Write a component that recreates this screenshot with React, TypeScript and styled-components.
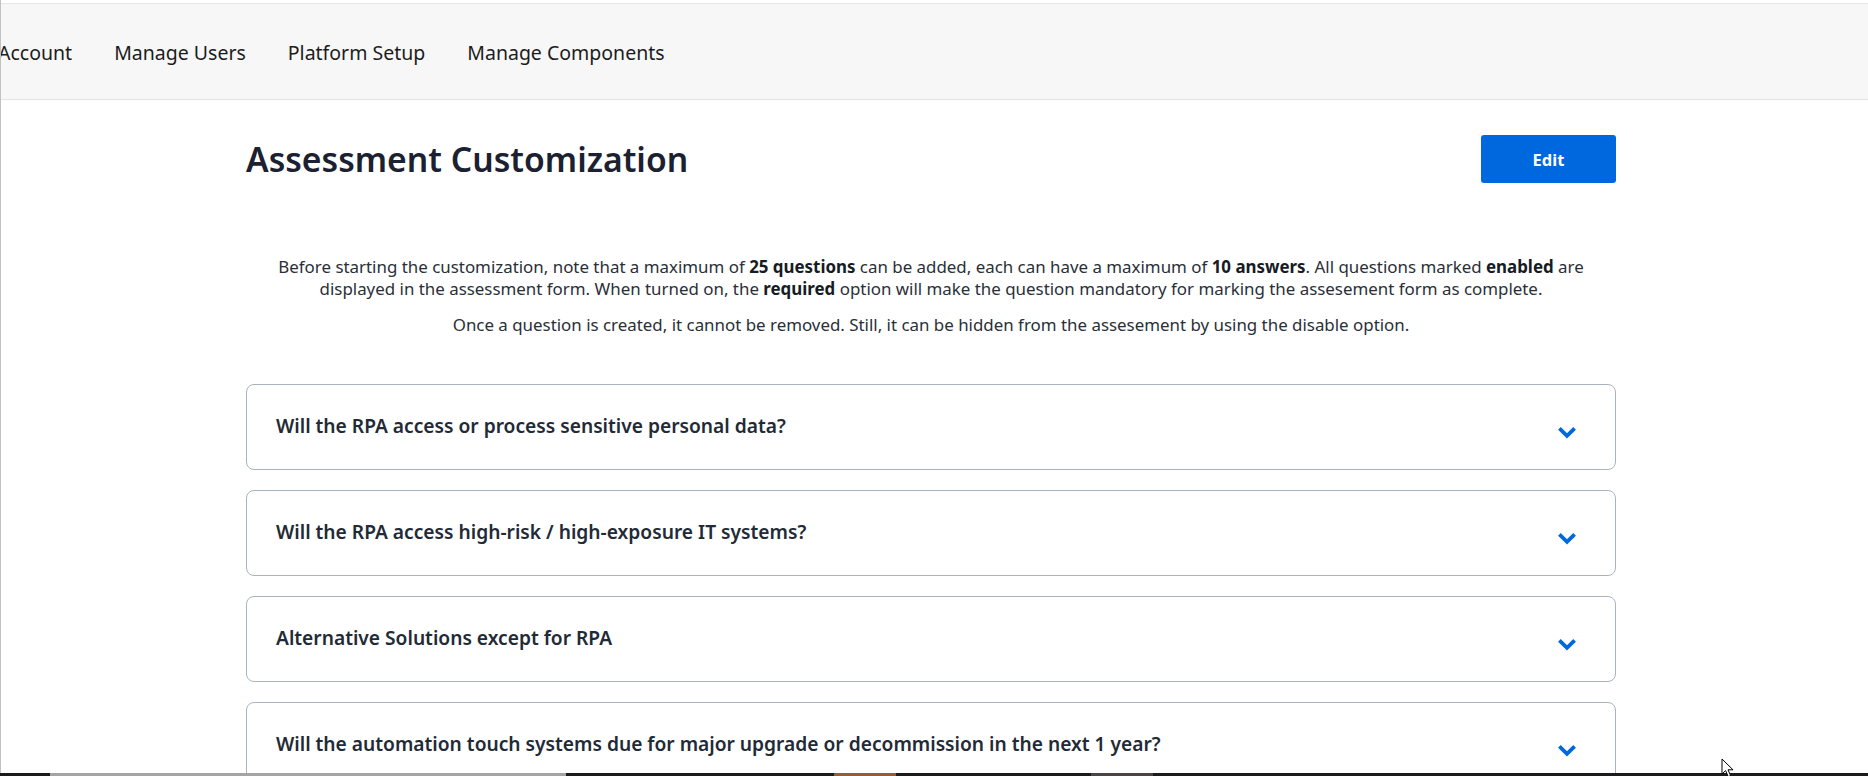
import React from 'react';
import styled, { createGlobalStyle } from 'styled-components';

const GlobalStyle = createGlobalStyle`
    html, body {
        margin : 0;
        padding : 0;
        background : #ffffff;
        overflow : hidden;
    }
    body {
        font-family : "Noto Sans", "Open Sans", Arial, sans-serif;
    }
`;

const Screen = styled.div`
    position : relative;
    width : 1868px;
    height : 776px;
    display : flex;
    flex-direction : column;
    overflow : hidden;
`;

const Page = styled.div`
    flex : 1;
    min-height : 0;
    display : flex;
    flex-direction : column;
    border-left : 1px solid #c2c2c2;
    overflow : hidden;
`;

const TopNav = styled.nav`
    flex-shrink : 0;
    margin-top : 3px;
    height : 97px;
    background-color : #f7f7f7;
    border-top : 1px solid #e6e6e6;
    border-bottom : 1px solid #e3e3e3;
    display : flex;
    align-items : center;
    gap : 42px;
    padding-top : 2px;
    box-sizing : border-box;
    overflow : hidden;
`;

const NavItem = styled.span<{ first?: boolean }>`
    font-size : 19.5px;
    color : #1c1c1c;
    white-space : nowrap;
    margin-left : ${p => (p.first ? '-3px' : '0')};
`;

const Content = styled.main`
    flex-shrink : 0;
    width : 1370px;
    margin-left : 245px;
    display : flex;
    flex-direction : column;
`;

const Header = styled.div`
    display : flex;
    justify-content : space-between;
    align-items : center;
    margin-top : 35px;
    height : 48px;
`;

const Title = styled.h1`
    margin : 0;
    font-size : 33.7px;
    font-weight : 600;
    color : #1b2130;
`;

const EditButton = styled.button`
    width : 135px;
    height : 48px;
    border : none;
    border-radius : 3px;
    background-color : #0068de;
    color : #ffffff;
    font-family : inherit;
    font-size : 16.5px;
    font-weight : 700;
    cursor : pointer;
`;

const Intro = styled.div`
    margin-top : 73px;
    padding : 0 22px;
    text-align : center;
    color : #2a2f38;
    font-size : 16.9px;
    line-height : 21.5px;

    p {
        margin : 0 0 15px;
    }
    b {
        font-weight : 700;
        color : #161b24;
    }
`;

const QuestionList = styled.div`
    margin-top : 33px;
    display : flex;
    flex-direction : column;
    gap : 20px;
`;

const QuestionCard = styled.div`
    height : 86px;
    flex-shrink : 0;
    box-sizing : border-box;
    border : 1px solid #a9b3bf;
    border-radius : 8px;
    display : flex;
    align-items : center;
    justify-content : space-between;
    padding : 0 38px 0 29px;
`;

const QuestionText = styled.span`
    font-size : 19.2px;
    font-weight : 600;
    color : #222a36;
    margin-bottom : 3px;
`;

const ChevronBox = styled.span`
    display : flex;
    margin-top : 12px;
`;

const TaskbarEdge = styled.div`
    height : 3px;
    flex-shrink : 0;
    background : linear-gradient(
        to right,
        #1b1b1b 0px, #1b1b1b 50px,
        #a4a4a4 50px, #a4a4a4 566px,
        #1b1b1b 566px, #1b1b1b 834px,
        #9a5a36 834px, #9a5a36 896px,
        #1b1b1b 896px, #1b1b1b 1091px,
        #4a4444 1091px, #4a4444 1153px,
        #1b1b1b 1153px
    );
`;

const Pointer = styled.svg`
    position : absolute;
    left : 1721px;
    top : 758px;
`;

const navItems = ['Account', 'Manage Users', 'Platform Setup', 'Manage Components'];

const questions = [
    'Will the RPA access or process sensitive personal data?',
    'Will the RPA access high-risk / high-exposure IT systems?',
    'Alternative Solutions except for RPA',
    'Will the automation touch systems due for major upgrade or decommission in the next 1 year?',
];

// chevron du bouton d'ouverture
const ChevronDown = () => {
    return (
        <svg width="20" height="13" viewBox="0 0 20 13" fill="none" xmlns="http://www.w3.org/2000/svg">
            <path d="M2.4 2.4L10 9.8L17.6 2.4" stroke="#0068de" strokeWidth="3.8" strokeLinejoin="miter" />
        </svg>
    );
};

const App = () => {
    return (
        <Screen>
            <GlobalStyle />
            <Page>
                <TopNav>
                    {navItems.map((item, i) => (
                        <NavItem key={item} first={i === 0}>{item}</NavItem>
                    ))}
                </TopNav>
                <Content>
                    <Header>
                        <Title>Assessment Customization</Title>
                        <EditButton>Edit</EditButton>
                    </Header>
                    <Intro>
                        <p>
                            Before starting the customization, note that a maximum of <b>25 questions</b> can be added, each can have a maximum of <b>10 answers</b>. All questions marked <b>enabled</b> are displayed in the assessment form. When turned on, the <b>required</b> option will make the question mandatory for marking the assesement form as complete.
                        </p>
                        <p>
                            Once a question is created, it cannot be removed. Still, it can be hidden from the assesement by using the disable option.
                        </p>
                    </Intro>
                    <QuestionList>
                        {questions.map(q => (
                            <QuestionCard key={q}>
                                <QuestionText>{q}</QuestionText>
                                <ChevronBox>
                                    <ChevronDown />
                                </ChevronBox>
                            </QuestionCard>
                        ))}
                    </QuestionList>
                </Content>
            </Page>
            <TaskbarEdge />
            <Pointer width="14" height="20" viewBox="0 0 14 20" xmlns="http://www.w3.org/2000/svg">
                <path d="M1 1L1 16L4.6 12.6L7.2 18.6L9.6 17.6L7 11.8L12 11.8Z" fill="#ffffff" stroke="#000000" strokeWidth="1" />
            </Pointer>
        </Screen>
    );
};

export default App;
